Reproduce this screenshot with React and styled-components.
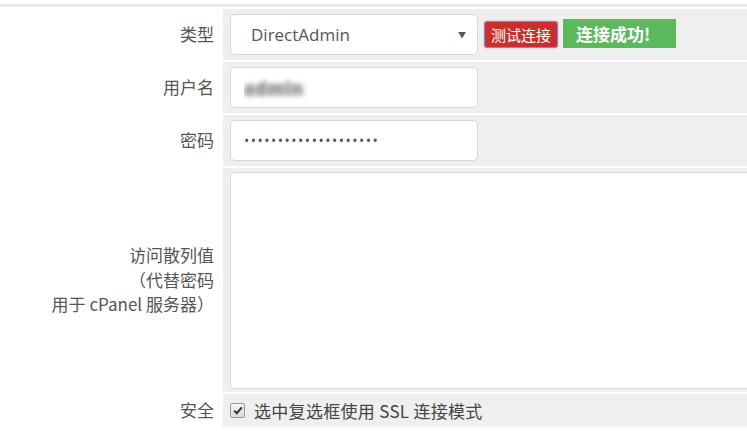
import styled, { createGlobalStyle } from "styled-components";

const GlobalStyle = createGlobalStyle`
    body {
        margin: 0;
        background: #fff;
        font-family: "Open Sans", "Noto Sans CJK SC", sans-serif;
    }
`;

const Page = styled.div`
    width: 747px;
    height: 431px;
    overflow: hidden;
    padding-top: 4px;
    box-sizing: border-box;
`;

const TopRule = styled.div`
    height: 3px;
    background-color: #e6eaed;
    margin-bottom: 2px;
`;

const Form = styled.div`
    display: grid;
    grid-template-columns: 223px 1fr;
    row-gap: 2px;
`;

const Label = styled.div`
    display: flex;
    align-items: center;
    justify-content: flex-end;
    text-align: right;
    padding-right: 9px;
    font-family: "Noto Sans CJK SC", "Open Sans", sans-serif;
    font-size: 17px;
    line-height: 24.5px;
    color: #555;
`;

const Cell = styled.div`
    display: flex;
    align-items: center;
    gap: 5px;
    background-color: #efefef;
    padding: ${(p) => p.$pad || "5px 7px 5px 7px"};
    min-width: 0;
`;

const Box = styled.div`
    width: 248px;
    height: 41px;
    box-sizing: border-box;
    background: #fff;
    border: 1px solid #d6d6d6;
    border-radius: 5px;
    display: flex;
    align-items: center;
    padding: 0 11px 0 20px;
    font-size: 17px;
    color: #555;
    flex-shrink: 0;
`;

const SelectText = styled.span`
    flex: 1;
`;

const Arrow = styled.span`
    font-size: 8px;
    color: #555;
`;

const TextInput = styled.input`
    width: 248px;
    height: 41px;
    box-sizing: border-box;
    background: #fff;
    border: 1px solid #d6d6d6;
    border-radius: 5px;
    padding: 0 13px;
    font-family: "Open Sans", sans-serif;
    font-size: ${(p) => (p.type === "password" ? "14px" : "18px")};
    font-weight: ${(p) => (p.$blurred ? 800 : 400)};
    letter-spacing: ${(p) => (p.type === "password" ? "1.5px" : "0")};
    color: ${(p) => (p.$blurred ? "transparent" : "#555")};
    text-shadow: ${(p) => (p.$blurred ? "0 0 5px #999, 0 0 6px #aaa" : "none")};
    outline: none;
`;

const TestButton = styled.button`
    height: 27px;
    margin-left: 1px;
    padding: 0 6px;
    background-color: #c9302c;
    border: 1px solid #8a86d6;
    border-radius: 3px;
    color: #fff;
    font-family: "Noto Sans CJK SC", sans-serif;
    font-size: 15px;
    line-height: 1;
    box-shadow: 0 0 2px #a9a6f0;
`;

const Status = styled.span`
    height: 29px;
    width: 113px;
    box-sizing: border-box;
    margin-top: -3px;
    display: flex;
    align-items: center;
    padding-left: 13px;
    background-color: #5cb85c;
    color: #fff;
    font-family: "Noto Sans CJK SC", sans-serif;
    font-weight: 700;
    font-size: 17px;
`;

const TextArea = styled.textarea`
    width: 560px;
    height: 217px;
    box-sizing: border-box;
    border: 1px solid #d6d6d6;
    border-radius: 5px;
    background: #fff;
    resize: none;
    outline: none;
    flex-shrink: 0;
`;

const CheckRow = styled.label`
    display: flex;
    align-items: center;
    gap: 9px;
    font-family: "Noto Sans CJK SC", "Open Sans", sans-serif;
    font-size: 17px;
    letter-spacing: 0.3px;
    color: #444;
`;

const CheckBox = styled.span`
    width: 15px;
    height: 15px;
    box-sizing: border-box;
    border: 1px solid #9a9a9a;
    border-radius: 2px;
    background: linear-gradient(#f4f4f4, #dcdcdc);
    display: flex;
    align-items: center;
    justify-content: center;
`;

function App() {
    return (
        <Page>
            <GlobalStyle />
            <TopRule />
            <Form>
                <Label>类型</Label>
                <Cell>
                    <Box>
                        <SelectText>DirectAdmin</SelectText>
                        <Arrow>▼</Arrow>
                    </Box>
                    <TestButton>测试连接</TestButton>
                    <Status>连接成功!</Status>
                </Cell>

                <Label>用户名</Label>
                <Cell>
                    <TextInput $blurred defaultValue="admin" />
                </Cell>

                <Label>密码</Label>
                <Cell>
                    <TextInput type="password" defaultValue="aaaaaaaaaaaaaaaaaaaa" />
                </Cell>

                <Label>
                    访问散列值
                    <br />
                    （代替密码
                    <br />
                    用于 cPanel 服务器）
                </Label>
                <Cell $pad="4px 7px 3px 7px">
                    <TextArea />
                </Cell>

                <Label>安全</Label>
                <Cell $pad="0 7px" style={{ height: 33 }}>
                    <CheckRow>
                        <CheckBox>
                            <svg width="10" height="9" viewBox="0 0 10 9">
                                <path d="M1.2 4.6 L3.8 7.2 L8.8 1.4" fill="none" stroke="#333" strokeWidth="2" />
                            </svg>
                        </CheckBox>
                        选中复选框使用 SSL 连接模式
                    </CheckRow>
                </Cell>
            </Form>
        </Page>
    );
}

export default App;
